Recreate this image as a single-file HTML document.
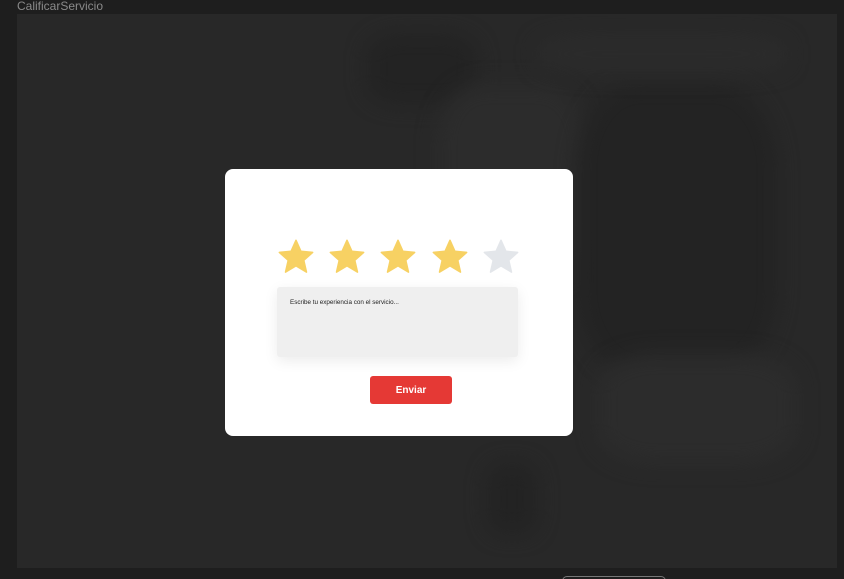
<!DOCTYPE html>
<html><head><meta charset="utf-8"><style>
html,body{margin:0;padding:0;width:844px;height:579px;overflow:hidden;background:#1e1e1e;font-family:"Liberation Sans",sans-serif;position:relative;}
.title{position:absolute;left:17px;top:0px;font-size:12px;color:#8a8a8a;line-height:13px;}
.frame{position:absolute;left:17px;top:14px;width:820px;height:554px;background:#282828;overflow:hidden;}
.b{position:absolute;border-radius:30%;filter:blur(10px);}
.modal{position:absolute;left:225px;top:169px;width:348px;height:267px;background:#fff;border-radius:8px;}
.stars{position:absolute;left:52px;top:69px;}
.stars svg{position:absolute;top:0;}
.ta{position:absolute;left:52px;top:118px;width:241px;height:70px;background:#efefef;border-radius:3px;box-shadow:0 4px 14px rgba(0,0,0,0.08);font-size:6.3px;color:#222;}
.ta span{position:absolute;left:13px;top:12px;}
.btn{position:absolute;left:145px;top:207px;width:82px;height:28px;background:#e53935;border-radius:3px;color:#fff;font-size:10px;font-weight:bold;text-align:center;line-height:30px;}
.bot{position:absolute;left:562px;top:576px;width:102px;height:6px;border:1px solid #777;border-bottom:none;border-radius:5px 5px 0 0;}
</style></head><body>
<div class="title">CalificarServicio</div>
<div class="frame">
 <div class="b" style="left:350px;top:20px;width:110px;height:70px;background:#232323"></div>
 <div class="b" style="left:420px;top:70px;width:150px;height:200px;background:#2c2c2c"></div>
 <div class="b" style="left:560px;top:70px;width:200px;height:290px;background:#232323"></div>
 <div class="b" style="left:520px;top:20px;width:250px;height:40px;background:#2b2b2b"></div>
 <div class="b" style="left:580px;top:340px;width:200px;height:110px;background:#2c2c2c"></div>
 <div class="b" style="left:470px;top:450px;width:50px;height:70px;background:#232323"></div>
</div>
<div class="modal">
 <div class="stars">
  <svg style="left:0" width="38" height="38" viewBox="0 0 24 24"><path fill="#f7d163" d="M12 1.5l3.1 6.9 7.4.7-5.6 5 1.7 7.4L12 17.6l-6.6 3.9 1.7-7.4-5.6-5 7.4-.7z" stroke="#f7d163" stroke-linejoin="round" stroke-width="1"/></svg>
  <svg style="left:51px" width="38" height="38" viewBox="0 0 24 24"><path fill="#f7d163" d="M12 1.5l3.1 6.9 7.4.7-5.6 5 1.7 7.4L12 17.6l-6.6 3.9 1.7-7.4-5.6-5 7.4-.7z" stroke="#f7d163" stroke-linejoin="round" stroke-width="1"/></svg>
  <svg style="left:102px" width="38" height="38" viewBox="0 0 24 24"><path fill="#f7d163" d="M12 1.5l3.1 6.9 7.4.7-5.6 5 1.7 7.4L12 17.6l-6.6 3.9 1.7-7.4-5.6-5 7.4-.7z" stroke="#f7d163" stroke-linejoin="round" stroke-width="1"/></svg>
  <svg style="left:154px" width="38" height="38" viewBox="0 0 24 24"><path fill="#f7d163" d="M12 1.5l3.1 6.9 7.4.7-5.6 5 1.7 7.4L12 17.6l-6.6 3.9 1.7-7.4-5.6-5 7.4-.7z" stroke="#f7d163" stroke-linejoin="round" stroke-width="1"/></svg>
  <svg style="left:205px" width="38" height="38" viewBox="0 0 24 24"><path fill="#e3e6ea" d="M12 1.5l3.1 6.9 7.4.7-5.6 5 1.7 7.4L12 17.6l-6.6 3.9 1.7-7.4-5.6-5 7.4-.7z" stroke="#e3e6ea" stroke-linejoin="round" stroke-width="1"/></svg>
 </div>
 <div class="ta"><span>Escribe tu experiencia con el servicio...</span></div>
 <div class="btn">Enviar</div>
</div>
<div class="bot"></div>
</body></html>
